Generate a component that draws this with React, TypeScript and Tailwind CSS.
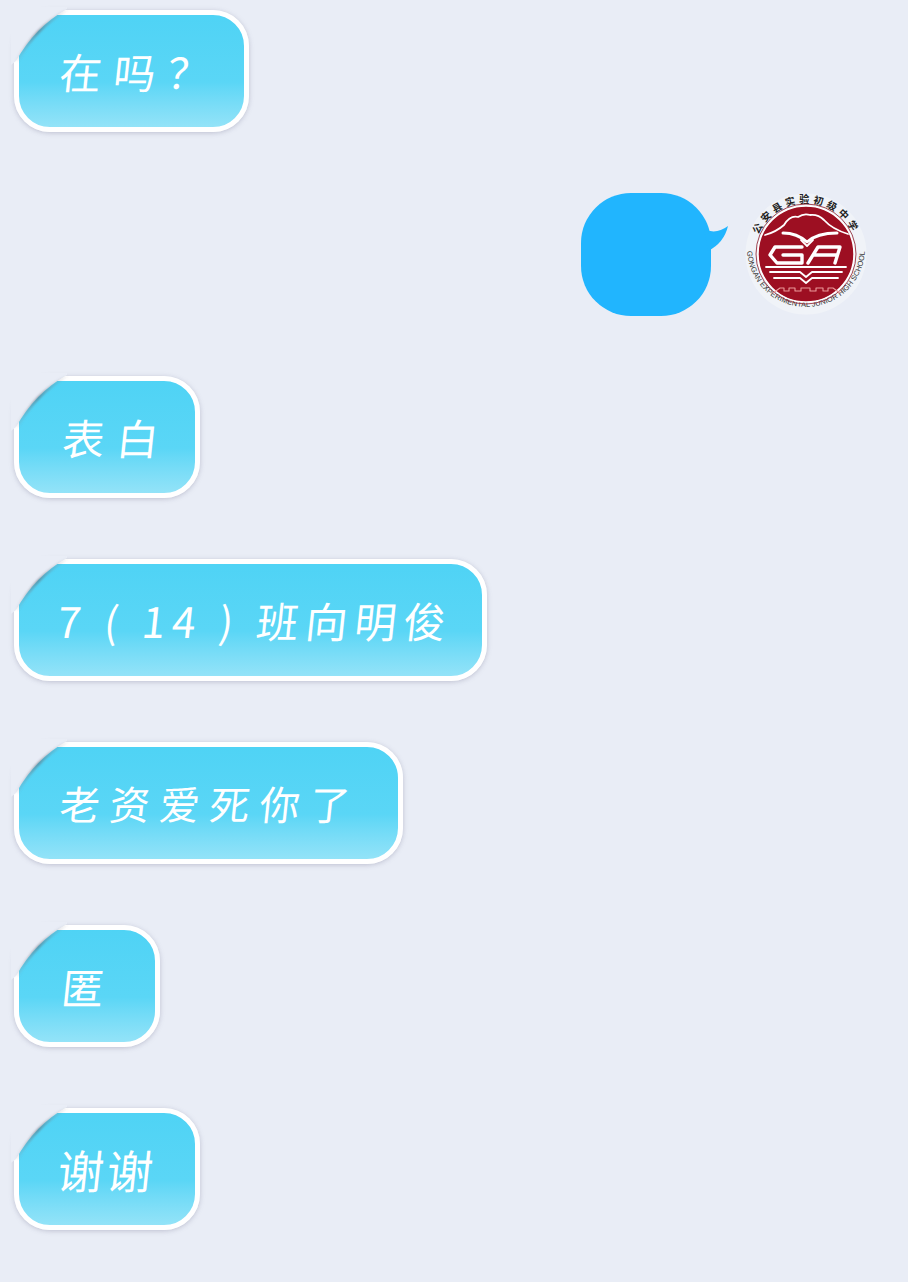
const F = '"Noto Sans CJK SC", "Liberation Sans", sans-serif';

function Bubble({ text, w, pl, size = 'text-[42px]', ls = 'tracking-[12px]', mt }: { text: string; w: string; pl: string; size?: string; ls?: string; mt: string }) {
  return (
    <div className={`relative ${w} ${mt} h-[122px] rounded-[36px] border-[5px] border-white bg-gradient-to-b from-[#4fd3f5] via-[#5ad6f6] via-60% to-[#93e3f8] shadow-[0_1px_5px_rgba(110,110,140,0.35)] flex items-center ${pl}`}>
      <span style={{ fontFamily: F }} className={`${size} ${ls} -skew-x-6 font-normal text-white whitespace-pre leading-none`}>{text}</span>
      <svg className="absolute -left-[8px] -top-[8px]" width="62" height="62" viewBox="0 0 62 62">
        <defs>
          <linearGradient id="fold" x1="0" y1="1" x2="1" y2="0">
            <stop offset="0" stopColor="#8a8f9c" stopOpacity="0.1" />
            <stop offset="0.5" stopColor="#5f6672" stopOpacity="0.6" />
            <stop offset="1" stopColor="#8a8f9c" stopOpacity="0.05" />
          </linearGradient>
          <filter id="soft"><feGaussianBlur stdDeviation="0.9" /></filter>
        </defs>
        <path d="M0 0 L56 0 L56 2 Q24 20 5 54 L0 58 Z" fill="#e9edf6" />
        <path d="M6 54 Q24 21 56 3" stroke="url(#fold)" strokeWidth="3" fill="none" filter="url(#soft)" />
      </svg>
    </div>
  );
}

function Logo() {
  return (
    <svg width="124" height="124" viewBox="0 0 124 124" className="shrink-0 overflow-visible">
      <circle cx="62" cy="61" r="60.5" fill="#f0f3f8" />
      <defs>
        <path id="topArc" d="M11 61 A51 51 0 0 1 113 61" />
        <path id="botArc" d="M3 55 A59 59 0 1 0 121 55" />
      </defs>
      <text fill="#222" fontSize="10" fontWeight="700" style={{ fontFamily: F }}>
        <textPath href="#topArc" startOffset="50%" textAnchor="middle" letterSpacing="3.4">公安县实验初级中学</textPath>
      </text>
      <text fill="#333" fontSize="7.4" letterSpacing="0.1" style={{ fontFamily: '"Liberation Sans", sans-serif' }}>
        <textPath href="#botArc" startOffset="50%" textAnchor="middle">GONGAN EXPERIMENTAL JUNIOR HIGH SCHOOL</textPath>
      </text>
      <circle cx="62" cy="61" r="48" fill="#9d0f22" stroke="#fff" strokeWidth="1.5" />
      <circle cx="62" cy="61" r="50" fill="none" stroke="#8b1a28" strokeWidth="0.8" />
      <g fill="none" stroke="#fff" strokeLinecap="round" strokeLinejoin="round">
        <path d="M21 42 Q32 39 40 32 Q46 22 54 24 Q60 20 66 22 Q74 21 80 27 Q88 36 104 41" strokeWidth="1.8" />
        <path d="M39 40 Q53 40 63 49 Q73 40 93 40" strokeWidth="3" />
        <path d="M57 47 L63 53 L69 47" strokeWidth="1.8" />
        <path d="M58 54 L31 54 L26 62 L33 70 L58 70 L58 62 L39 62" strokeWidth="3.4" />
        <path d="M64 70 L74 54 L96 54 L91 70 M71 62 L93 62" strokeWidth="3.4" />
        <path d="M22 74 L102 74" strokeWidth="1.8" />
        <path d="M26 79 L56 79 L62 84 L68 79 L98 79" strokeWidth="1.8" />
        <path d="M30 85 L56 85 L62 90 L68 85 L94 85" strokeWidth="1.8" />
        <path d="M29 100 L36 95 L40 95 L40 98 L45 98 L45 95 L51 95 L51 98 L57 98 L57 95 L66 95 L66 98 L72 98 L72 95 L79 95 L79 98 L84 98 L84 95 L89 95 L96 100" strokeWidth="1.1" stroke="#eb9a9a" />
      </g>
    </svg>
  );
}

export default function App() {
  return (
    <div className="w-[908px] h-[1282px] bg-[#e9edf6] overflow-hidden pl-[14px] pt-[10px] flex flex-col items-start">
      <Bubble text="在吗？" w="w-[235px]" pl="pl-[41px]" mt="mt-0" />
      <div className="w-[880px] mt-[61px] h-[123px] flex items-center justify-end pr-[26px]">
        <div className="relative w-[130px] h-[123px] rounded-[50px] bg-[#21b5fe]">
          <svg className="absolute left-[123px] top-[30px]" width="26" height="30" viewBox="0 0 26 30">
            <path d="M0 6 Q12 12 24 3 Q20 20 4 28 Z" fill="#21b5fe" />
          </svg>
        </div>
        <div className="ml-[33px]"><Logo /></div>
      </div>
      <Bubble text="表白" w="w-[186px]" pl="pl-[44px]" mt="mt-[60px]" />
      <Bubble text="7 ( 14 ) 班向明俊" w="w-[473px]" pl="pl-[39px]" ls="tracking-[7px]" mt="mt-[61px]" />
      <Bubble text="老资爱死你了" w="w-[389px]" pl="pl-[41px]" size="text-[40px]" ls="tracking-[10px]" mt="mt-[61px]" />
      <Bubble text="匿" w="w-[146px]" pl="pl-[43px]" ls="tracking-normal" mt="mt-[61px]" />
      <Bubble text="谢谢" w="w-[186px]" pl="pl-[39px]" size="text-[46px]" ls="tracking-[3px]" mt="mt-[61px]" />
    </div>
  );
}
